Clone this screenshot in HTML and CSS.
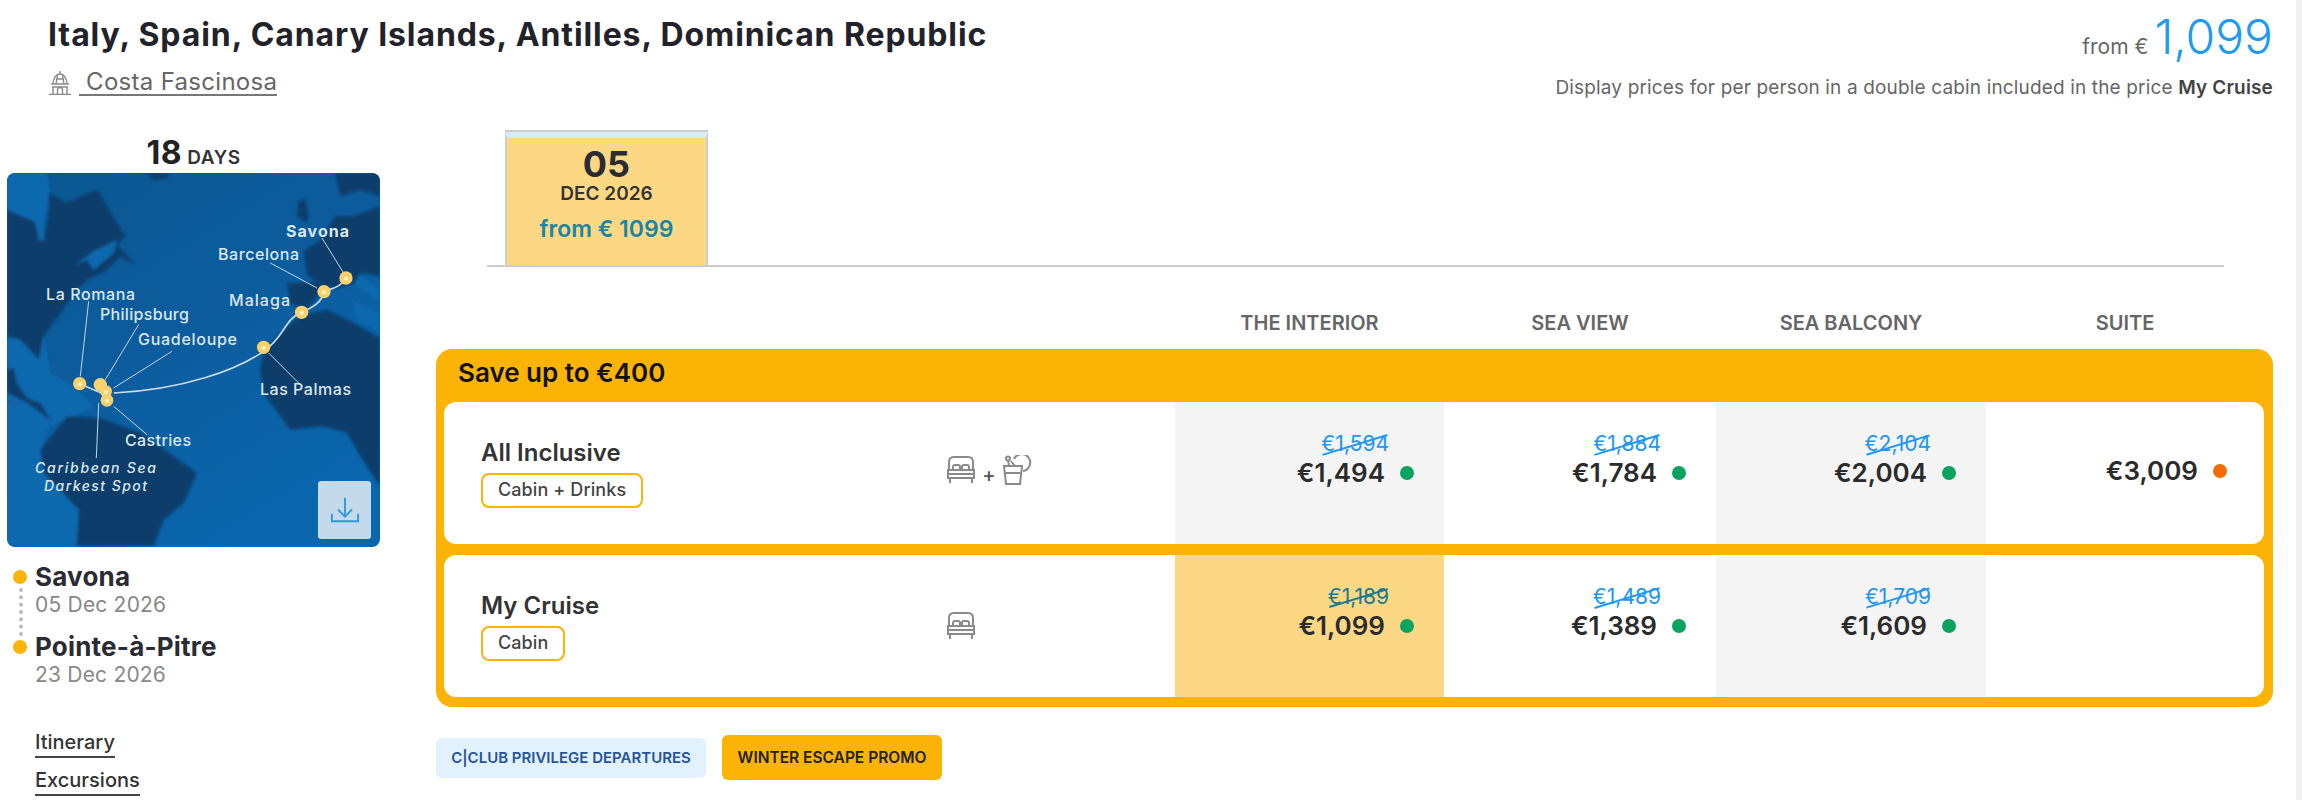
FILE: index.html
```html
<!DOCTYPE html>
<html lang="en">
<head>
  <meta charset="UTF-8">
  <meta name="viewport" content="width=device-width, initial-scale=1.0">
  <title>Costa Fascinosa - Cruise</title>
  <link rel="stylesheet" href="styles.css">
</head>
<body>
  <div class="page">
    <div class="trip-head">
      <div class="trip-title">
        <h1>Italy, Spain, Canary Islands, Antilles, Dominican Republic</h1>
        <a class="ship" href="#ship">
          <svg class="ship-icon" viewBox="0 0 24 24" fill="none" stroke="#8a8a8a" stroke-width="1.4">
            <path d="M12 0v3M5 13c0-5 3-10 7-10s7 5 7 10"/>
            <path d="M3 13h18M4 16h16M5 16v7M19 16v7M1 23.500h22"/>
            <path d="M9.500 23v-4a2.500 2.500 0 0 1 5 0v4M8 8h8M9.500 4.500 8 13M14.500 4.500 16 13"/>
          </svg>
          <span class="ship-name">&nbsp;Costa Fascinosa</span>
        </a>
      </div>
      <div class="trip-price">
        <div class="from">from € <span class="from-value">1,099</span></div>
        <div class="note">Display prices for per person in a double cabin included in the price <b>My Cruise</b></div>
      </div>
    </div>

    <div class="trip-body">
      <div class="side">
        <div class="days"><b>18</b> <span>DAYS</span></div>
        <div class="map">
          <svg class="map-art" viewBox="0 0 373 374">
            <defs>
              <linearGradient id="sea" x1="0" y1="0" x2="0.6" y2="1">
                <stop offset="0" stop-color="#0b5690"/>
                <stop offset="0.5" stop-color="#0c5c9d"/>
                <stop offset="1" stop-color="#0a66ad"/>
              </linearGradient>
              <filter id="soft"><feGaussianBlur stdDeviation="4"/></filter>
            </defs>
            <rect width="373" height="374" fill="url(#sea)"/>
            <!-- land is drawn at 3x and scaled down -->
            <g transform="scale(0.3333)">
              <g filter="url(#soft)">
                <path fill="#0f69ae" d="M0 500 110 480 130 600 200 640 260 700 130 760 60 700 0 680z"/>
                <path fill="#0f69ae" d="M0 0H120L130 60 100 200 0 110z"/>
                <path fill="#0f69ae" d="M0 690 60 700 130 750 100 830 110 900 215 1010 205 1119H0z"/>
                <path fill="#073d6b" d="M0 110 80 145 110 205 125 130 125 60 180 90 270 50 355 190 330 215 385 275 340 250 300 290 240 320 210 350 160 420 110 490 95 560 40 500 0 490z"/>
                <path fill="#0f69ae" d="M85 140 112 150 110 205 95 200z"/>
                <path fill="#0f69ae" d="M205 275 260 235 330 200 320 240 260 290 240 260z"/>
                <path fill="#073d6b" d="M420 0H490L480 15 440 22z"/>
                <path fill="#073d6b" d="M0 590 20 585 30 630 60 675 100 690 135 745 60 690 0 660z"/>
                <path fill="#073d6b" d="M100 830 180 730 280 735 400 780 500 850 570 900 530 990 470 1040 440 1119H210L215 1010 110 900z"/>
                <path fill="#073d6b" d="M760 590 770 530 830 470 880 430 960 410 1040 450 1119 495V940L1060 850 1020 780 950 760 850 770 770 660z"/>
                <path fill="#073d6b" d="M840 330 930 328 950 345 900 410 850 390z"/>
                <path fill="#073d6b" d="M985 0H1119V70L1060 50 1000 70z"/>
                <path fill="#073d6b" d="M875 85 895 80 905 130 900 150 870 130z"/>
                <path fill="#073d6b" d="M890 235 940 200 985 130 1040 130 1119 100V310L1060 300 1040 330 1000 345 950 340 900 305z"/>
                <path fill="#0f69ae" d="M1060 305 1119 350V385L1045 340zM1040 385 1119 420V480L1050 440z"/>
              </g>
              <g fill="none" stroke="#c3d6e6" stroke-width="3">
                <path d="M245 385 220 610M395 455 295 620M495 535 320 645M785 540 875 630M320 700 420 785M275 690 268 855M945 195 1010 300M790 270 930 345"/>
              </g>
              <path d="M1017 315C1000 345 975 345 950 357 945 385 925 400 884 418 830 440 835 490 770 535 690 590 530 650 320 660M218 632 295 665" fill="none" stroke="#c9dcec" stroke-width="5"/>
              <g fill="#fbd16b">
                <circle cx="1017" cy="315" r="20"/>
                <circle cx="951" cy="356" r="20"/>
                <circle cx="884" cy="418" r="20"/>
                <circle cx="770" cy="523" r="20"/>
                <circle cx="218" cy="632" r="20"/>
                <circle cx="280" cy="635" r="20"/>
                <circle cx="297" cy="655" r="18"/>
                <circle cx="300" cy="682" r="19"/>
              </g>
              <g fill="#fff3cf">
                <circle cx="1017" cy="317" r="6"/>
                <circle cx="951" cy="358" r="6"/>
                <circle cx="884" cy="420" r="6"/>
                <circle cx="770" cy="525" r="6"/>
                <circle cx="218" cy="634" r="6"/>
                <circle cx="297" cy="657" r="6"/>
                <circle cx="300" cy="684" r="6"/>
              </g>
            </g>
            <g class="map-labels">
              <text x="279" y="64" font-weight="700" textLength="63">Savona</text>
              <text x="211" y="87" textLength="81">Barcelona</text>
              <text x="39" y="127" textLength="89">La Romana</text>
              <text x="222" y="133" textLength="61">Malaga</text>
              <text x="93" y="147" textLength="89">Philipsburg</text>
              <text x="131" y="172" textLength="99">Guadeloupe</text>
              <text x="253" y="222" textLength="91">Las Palmas</text>
              <text x="118" y="273" textLength="66">Castries</text>
              <text class="map-label-small" x="28" y="300" font-style="italic" textLength="121">Caribbean Sea</text>
              <text class="map-label-small" x="37" y="318" font-style="italic" textLength="103">Darkest Spot</text>
            </g>
          </svg>
          <div class="map-download">
            <svg viewBox="0 0 32 32" fill="none" stroke="#2f97e0" stroke-width="2">
              <path d="M16 3v20M8.500 15.500 16 23l7.500-7.500M2 20v8h28v-8"/>
            </svg>
          </div>
        </div>

        <div class="route">
          <div class="stop">
            <div class="stop-name">Savona</div>
            <div class="stop-date">05 Dec 2026</div>
          </div>
          <div class="stop">
            <div class="stop-name">Pointe-à-Pitre</div>
            <div class="stop-date">23 Dec 2026</div>
          </div>
        </div>

        <div class="side-links">
          <a href="#itinerary">Itinerary</a>
          <a href="#excursions">Excursions</a>
        </div>
      </div>

      <div class="content">
        <div class="tabs">
          <div class="tab">
            <div class="tab-day">05</div>
            <div class="tab-month">DEC 2026</div>
            <div class="tab-price">from € 1099</div>
          </div>
        </div>

        <div class="col-heads">
          <div class="col-head">THE INTERIOR</div>
          <div class="col-head">SEA VIEW</div>
          <div class="col-head">SEA BALCONY</div>
          <div class="col-head">SUITE</div>
        </div>

        <div class="offer">
          <div class="offer-title">Save up to €400</div>

          <div class="fare">
            <div class="fare-info">
              <div class="fare-text">
                <div class="fare-name">All Inclusive</div>
                <span class="fare-badge">Cabin + Drinks</span>
              </div>
              <div class="fare-icons">
                <svg class="bed" viewBox="0 0 30 30" fill="none" stroke="#8a8a8a" stroke-width="2">
                  <path d="M3 15V7q0-5 5-5h14q5 0 5 5v8"/>
                  <path d="M7 14v-2q0-2 2-2h3q2 0 2 2v2M16 14v-2q0-2 2-2h3q2 0 2 2v2"/>
                  <path d="M2 15h26v8H2zM2 19h26M4 23v5M26 23v5"/>
                </svg>
                <span class="plus">+</span>
                <svg class="drink" viewBox="0 0 30 30" fill="none" stroke="#8a8a8a" stroke-width="2">
                  <path d="M2 11h18l-2 18H4zM3 18h16"/>
                  <path d="M7 11 6 5M13 11 9 6"/>
                  <circle cx="6" cy="3.500" r="2"/>
                  <path d="M12 4a8.500 8.500 0 1 1 9 12"/>
                </svg>
              </div>
            </div>
            <div class="cell cell-grey">
              <span class="old-price">€1,594</span>
              <div class="price">€1,494 <i class="dot"></i></div>
            </div>
            <div class="cell">
              <span class="old-price">€1,884</span>
              <div class="price">€1,784 <i class="dot"></i></div>
            </div>
            <div class="cell cell-grey">
              <span class="old-price">€2,104</span>
              <div class="price">€2,004 <i class="dot"></i></div>
            </div>
            <div class="cell cell-last">
              <div class="price">€3,009 <i class="dot dot-orange"></i></div>
            </div>
          </div>

          <div class="fare">
            <div class="fare-info">
              <div class="fare-text">
                <div class="fare-name">My Cruise</div>
                <span class="fare-badge">Cabin</span>
              </div>
              <div class="fare-icons fare-icons-single">
                <svg class="bed" viewBox="0 0 30 30" fill="none" stroke="#8a8a8a" stroke-width="2">
                  <path d="M3 15V7q0-5 5-5h14q5 0 5 5v8"/>
                  <path d="M7 14v-2q0-2 2-2h3q2 0 2 2v2M16 14v-2q0-2 2-2h3q2 0 2 2v2"/>
                  <path d="M2 15h26v8H2zM2 19h26M4 23v5M26 23v5"/>
                </svg>
              </div>
            </div>
            <div class="cell cell-best">
              <span class="old-price">€1,189</span>
              <div class="price">€1,099 <i class="dot"></i></div>
            </div>
            <div class="cell">
              <span class="old-price">€1,489</span>
              <div class="price">€1,389 <i class="dot"></i></div>
            </div>
            <div class="cell cell-grey">
              <span class="old-price">€1,709</span>
              <div class="price">€1,609 <i class="dot"></i></div>
            </div>
            <div class="cell cell-last"></div>
          </div>
        </div>

        <div class="promos">
          <span class="promo promo-club">C|CLUB PRIVILEGE DEPARTURES</span>
          <span class="promo promo-winter">WINTER ESCAPE PROMO</span>
        </div>
      </div>
    </div>
  </div>
</body>
</html>
```

FILE: styles.css
```css
html, body {
  margin: 0;
  padding: 0;
  height: 800px;
  overflow: hidden;
}
body {
  font-family: Inter, "Open Sans", sans-serif;
  color: #222;
  background-color: #f1f1f1;
}
a {
  color: inherit;
}
.page {
  width: 2296px;
  height: 800px;
  overflow: hidden;
  background-color: #fff;
}

/* top line */
.trip-head {
  display: flex;
  justify-content: space-between;
  box-sizing: border-box;
  height: 132px;
  padding: 0 23px 0 48px;
}
.trip-title h1 {
  margin: 0;
  padding-top: 15px;
  font-size: 32px;
  line-height: 40px;
  font-weight: 700;
  letter-spacing: 0.9px;
  color: #22222a;
}
.ship {
  display: flex;
  align-items: center;
  margin-top: 15px;
  font-size: 24px;
  line-height: 30px;
  color: #666;
  text-decoration: none;
}
.ship-icon {
  width: 24px;
  height: 24px;
  margin-right: 7px;
}
.ship-name {
  border-bottom: 2px solid #777;
  line-height: 24px;
  letter-spacing: 0.3px;
}
.trip-price {
  text-align: right;
}
.from {
  height: 64px;
  padding-top: 10px;
  box-sizing: border-box;
  font-size: 21px;
  line-height: 54px;
  color: #666;
}
.from-value {
  font-size: 48px;
  font-weight: 300;
  color: #1e9bf0;
}
.note {
  font-size: 19px;
  line-height: 24px;
  margin-top: 12px;
  letter-spacing: 0.15px;
  color: #666;
}
.note b {
  font-weight: 600;
  color: #444;
}

/* left column */
.trip-body {
  display: flex;
}
.side {
  box-sizing: border-box;
  width: 436px;
  padding-left: 7px;
  flex: none;
}
.days {
  width: 373px;
  height: 41px;
  text-align: center;
  line-height: 41px;
  font-size: 19px;
  font-weight: 600;
  letter-spacing: 0.5px;
  color: #333;
}
.days b {
  font-size: 32px;
  font-weight: 700;
  color: #222;
}
.map {
  position: relative;
  width: 373px;
  height: 374px;
  border-radius: 8px;
  overflow: hidden;
}
.map-art {
  display: block;
  width: 373px;
  height: 374px;
}
.map-labels {
  font-size: 16px;
  font-weight: 500;
  fill: #dbe7f1;
}
.map-label-small {
  font-size: 14px;
}
.map-download {
  position: absolute;
  left: 311px;
  top: 308px;
  display: flex;
  align-items: center;
  justify-content: center;
  width: 53px;
  height: 58px;
  border-radius: 3px;
  background-color: #c4d9ea;
}
.map-download svg {
  width: 30px;
  height: 30px;
}
.route {
  margin-top: 15px;
  padding-left: 28px;
  position: relative;
}
.route::before {
  content: '';
  position: absolute;
  left: 12px;
  top: 26px;
  height: 48px;
  border-left: 4px dotted #b5bac2;
}
.stop {
  position: relative;
  height: 70px;
}
.stop::before {
  content: '';
  position: absolute;
  left: -22px;
  top: 8px;
  width: 14px;
  height: 14px;
  border-radius: 50%;
  background-color: #fbb305;
}
.stop-name {
  font-size: 26px;
  line-height: 30px;
  font-weight: 700;
  letter-spacing: 0.2px;
  color: #2b2b33;
}
.stop-date {
  font-size: 21px;
  line-height: 26px;
  letter-spacing: 0.2px;
  color: #888;
}
.side-links {
  margin-top: 26px;
  padding-left: 28px;
}
.side-links a {
  display: table;
  font-size: 20px;
  line-height: 28px;
  font-weight: 500;
  color: #333;
  text-decoration: none;
  border-bottom: 2px solid #444;
  margin-bottom: 8px;
}

/* tabs */
.content {
  box-sizing: border-box;
  flex: none;
  width: 1837px;
}
.tabs {
  display: flex;
  height: 133px;
  margin: 0 49px 0 51px;
  padding-left: 18px;
  border-bottom: 2px solid #ccc;
}
.tab {
  box-sizing: border-box;
  width: 203px;
  height: 133px;
  border: 2px solid #ccc;
  border-bottom: 0;
  border-top: 6px solid #d9ebf7;
  background-color: #fcd884;
  text-align: center;
  box-shadow: 0 -2px 0 #ccc;
}
.tab-day {
  margin-top: 6px;
  font-size: 36px;
  line-height: 40px;
  font-weight: 700;
  color: #2b2b33;
}
.tab-month {
  margin-top: -1px;
  font-size: 19px;
  line-height: 22px;
  font-weight: 600;
  color: #333;
}
.tab-price {
  margin-top: 9px;
  font-size: 23px;
  line-height: 30px;
  font-weight: 600;
  color: #1a85a5;
}

/* fares */
.col-heads {
  display: grid;
  grid-template-columns: 269px 272px 270px 278px;
  align-items: end;
  height: 82px;
  margin-left: 739px;
}
.col-head {
  padding-bottom: 14px;
  text-align: center;
  font-size: 20px;
  line-height: 24px;
  font-weight: 600;
  color: #666;
}
.offer {
  box-sizing: border-box;
  width: 1837px;
  padding: 0 9px 10px 8px;
  border-radius: 16px;
  background-color: #fbb305;
}
.offer-title {
  height: 53px;
  padding-left: 14px;
  font-size: 26px;
  line-height: 48px;
  font-weight: 600;
  color: #111;
}
.fare {
  display: grid;
  grid-template-columns: 731px 269px 272px 270px 278px;
  height: 142px;
  border-radius: 12px;
  overflow: hidden;
  background-color: #fff;
}
.fare + .fare {
  margin-top: 11px;
}
.fare-info {
  display: flex;
  padding-left: 37px;
}
.fare-text {
  width: 465px;
  padding-top: 35px;
}
.fare-name {
  font-size: 24px;
  line-height: 32px;
  font-weight: 600;
  color: #333;
}
.fare-badge {
  display: inline-block;
  box-sizing: border-box;
  height: 35px;
  margin-top: 4px;
  padding: 0 15px;
  border: 2px solid #fbb305;
  border-radius: 8px;
  font-size: 18px;
  line-height: 30px;
  letter-spacing: 0.1px;
  font-weight: 500;
  color: #444;
}
.fare-icons {
  display: flex;
  align-items: flex-start;
  padding-top: 53px;
}
.fare-icons-single {
  padding-top: 56px;
}
.bed, .drink {
  width: 30px;
  height: 30px;
}
.plus {
  width: 26px;
  padding-top: 8px;
  text-align: center;
  font-size: 20px;
  line-height: 24px;
  font-weight: 500;
  color: #555;
}
.cell {
  box-sizing: border-box;
  padding: 29px 30px 0 0;
  text-align: right;
}
.cell-grey {
  background-color: #f4f4f4;
}
.cell-best {
  background-color: #fcd884;
}
.cell-last {
  padding-right: 37px;
  padding-top: 53px;
}
.old-price {
  position: relative;
  display: inline-block;
  margin-right: 25px;
  font-size: 21px;
  line-height: 26px;
  color: #2196f3;
}
.old-price::after {
  content: '';
  position: absolute;
  left: 0;
  right: 0;
  top: 13px;
  height: 2px;
  background-color: currentColor;
  transform: rotate(-17deg);
}
.cell-best .old-price {
  color: #1a7a94;
}
.price {
  display: flex;
  justify-content: flex-end;
  align-items: center;
  gap: 15px;
  margin-top: -1px;
  font-size: 26px;
  line-height: 34px;
  font-weight: 600;
  color: #2b2b2b;
}
.dot {
  width: 14px;
  height: 14px;
  border-radius: 50%;
  background-color: #0aa35f;
}
.dot-orange {
  background-color: #f76c00;
}

/* promo tags */
.promos {
  display: flex;
  align-items: center;
  gap: 16px;
  margin-top: 28px;
}
.promo {
  box-sizing: border-box;
  display: flex;
  align-items: center;
  justify-content: center;
  border-radius: 6px;
  font-size: 15px;
  font-weight: 600;
}
.promo-club {
  width: 270px;
  height: 40px;
  background-color: #e1f2fe;
  color: #27539b;
}
.promo-winter {
  width: 220px;
  height: 45px;
  background-color: #fbb305;
  font-size: 15.500px;
  color: #222;
}
```
